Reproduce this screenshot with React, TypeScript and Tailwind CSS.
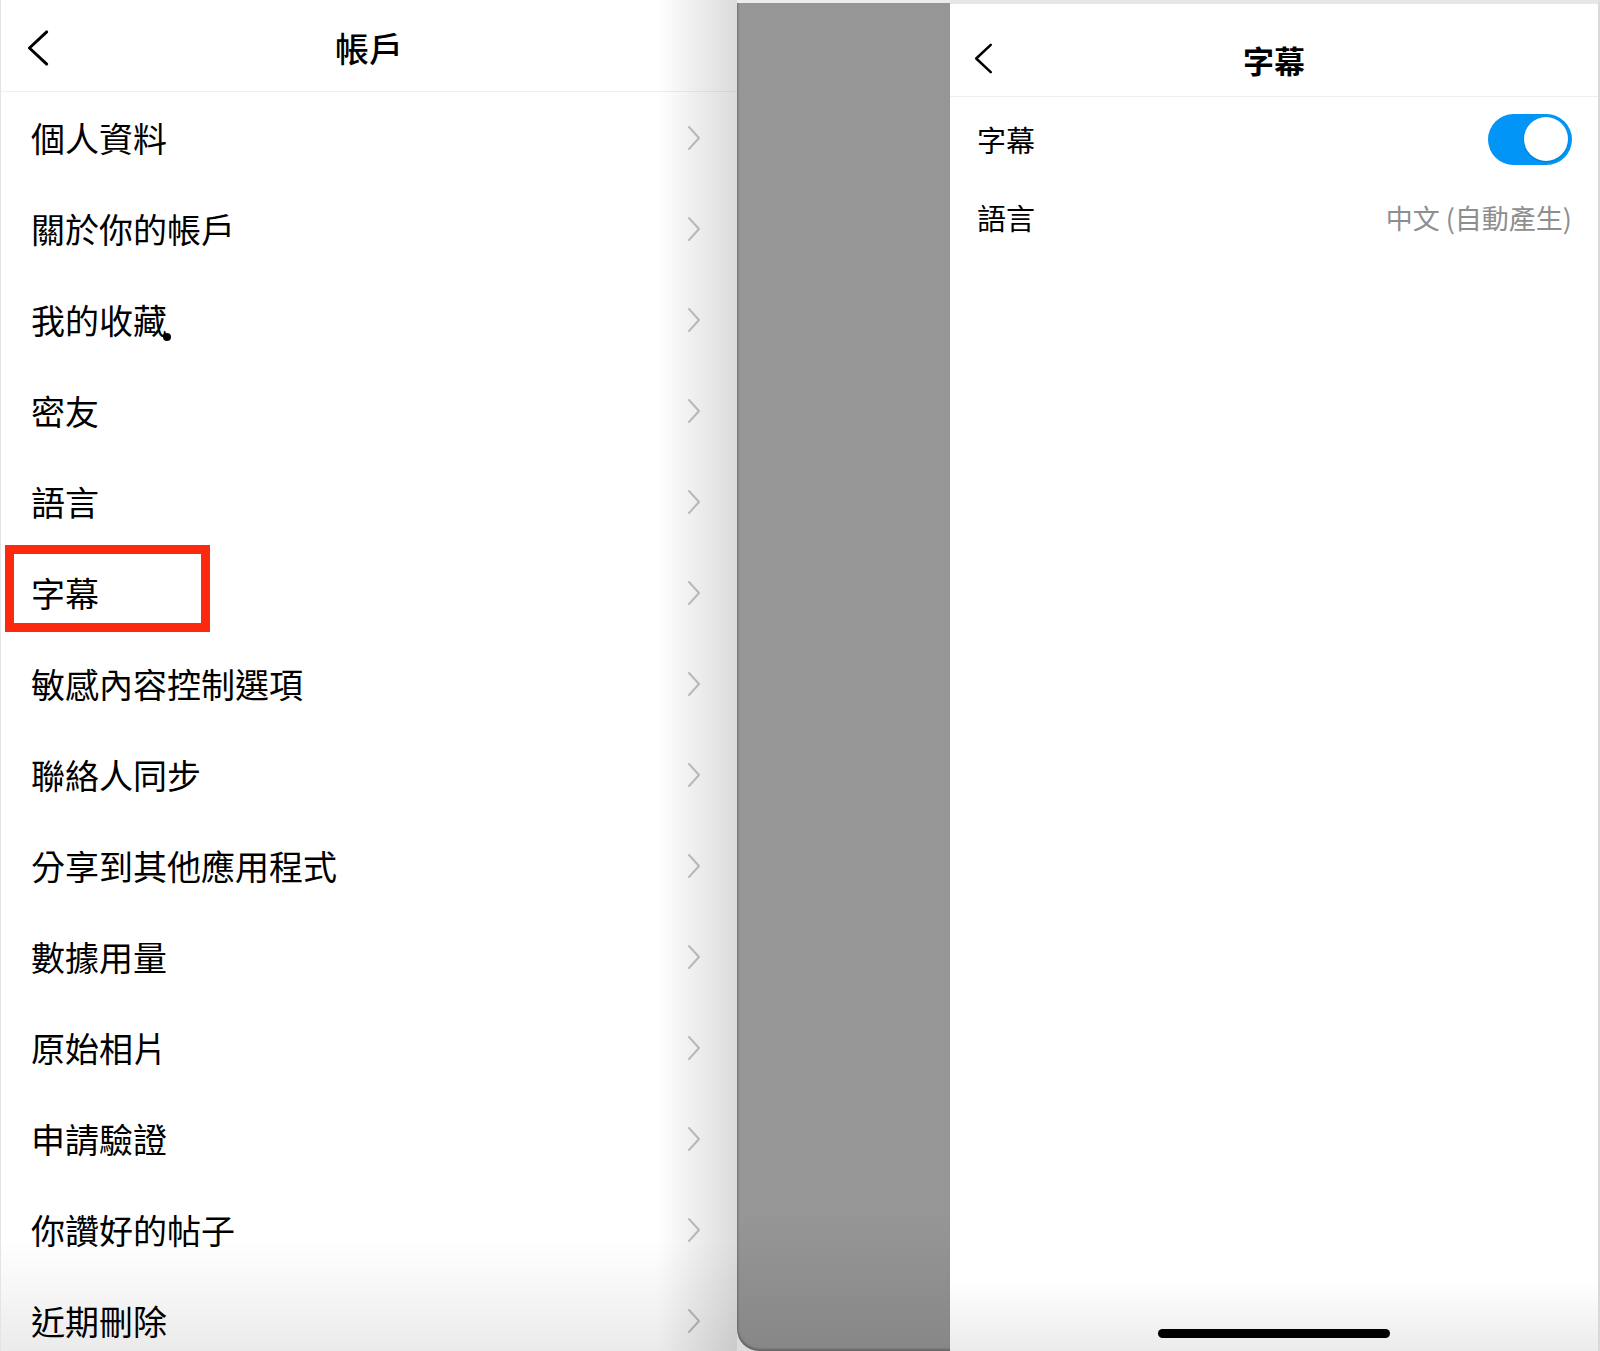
import React from "react";

const menuItems = [
  "個人資料",
  "關於你的帳戶",
  "我的收藏",
  "密友",
  "語言",
  "字幕",
  "敏感內容控制選項",
  "聯絡人同步",
  "分享到其他應用程式",
  "數據用量",
  "原始相片",
  "申請驗證",
  "你讚好的帖子",
  "近期刪除",
];

const cjk = { fontFamily: '"Noto Sans CJK TC", "Noto Sans CJK SC", sans-serif' };

const BackIcon = ({ w, h }: { w: number; h: number }) => (
  <svg width={w} height={h} viewBox="0 0 20 32" fill="none">
    <path
      d="M18 2 L3 16 L18 30"
      stroke="#000"
      strokeWidth="2.6"
      strokeLinecap="round"
      strokeLinejoin="round"
    />
  </svg>
);

const Chevron = () => (
  <svg width="14" height="26" viewBox="0 0 14 26" fill="none">
    <path
      d="M2 2 L12 13 L2 24"
      stroke="#c4c4c4"
      strokeWidth="2"
      strokeLinecap="round"
      strokeLinejoin="round"
    />
  </svg>
);

const AccountPanel = () => {
  return (
    <div className="relative w-[737px] h-full bg-white overflow-hidden border-l border-[#e4e4e4]">
      <div className="relative h-[92px] pt-[4px] flex items-center justify-center border-b border-[#efefef]">
        <div className="absolute left-[25px] top-[29px]">
          <BackIcon w={23} h={38} />
        </div>
        <p className="text-[34px] font-medium text-black leading-none" style={cjk}>
          帳戶
        </p>
      </div>
      <div className="flex flex-col">
        {menuItems.map((item) => (
          <div
            key={item}
            className="h-[91px] flex items-center justify-between pl-[30px] pr-[36px]"
          >
            <span className="text-[34px] text-black leading-none" style={cjk}>
              {item}
            </span>
            <Chevron />
          </div>
        ))}
      </div>
      {/* cursor dot */}
      <div className="absolute left-[162px] top-[333px] w-[8px] h-[8px] rounded-full bg-black" />
      {/* highlight box */}
      <div className="absolute left-[4px] top-[545px] w-[205px] h-[87px] border-[9px] border-[#fb2a0e]" />
      {/* shading */}
      <div className="pointer-events-none absolute top-0 right-0 h-full w-[80px] bg-linear-to-r from-transparent to-black/[0.14]" />
      <div className="pointer-events-none absolute bottom-0 left-0 w-full h-[110px] bg-linear-to-b from-transparent to-black/[0.08]" />
    </div>
  );
};

const CaptionPanel = () => {
  return (
    <div className="relative flex-1 h-full bg-white border-t-4 border-t-[#e6e6e6] border-r-2 border-r-[#d9d9d9] overflow-hidden">
      <div className="relative h-[93px] pt-[18px] flex items-center justify-center border-b border-[#efefef]">
        <div className="absolute left-[23px] top-[39px]">
          <BackIcon w={20} h={31} />
        </div>
        <p className="text-[31px] font-semibold text-black leading-none" style={cjk}>
          字幕
        </p>
      </div>
      <div className="h-[84px] flex items-center justify-between pl-[27px] pr-[26px]">
        <span className="text-[29px] text-black leading-none" style={cjk}>
          字幕
        </span>
        <div className="w-[84px] h-[51px] rounded-full bg-[#0095f6] flex items-center justify-end pr-[4px]">
          <div className="w-[44px] h-[44px] rounded-full bg-white shadow-[0_1px_2px_rgba(0,0,0,0.2)]" />
        </div>
      </div>
      <div className="h-[72px] flex items-center justify-between pl-[27px] pr-[26px]">
        <span className="text-[29px] text-black leading-none" style={cjk}>
          語言
        </span>
        <span className="text-[27px] text-[#8e8e8e] leading-none" style={cjk}>
          中文 (自動產生)
        </span>
      </div>
      <div className="pointer-events-none absolute bottom-0 left-0 w-full h-[70px] bg-linear-to-b from-transparent to-black/[0.08]" />
      <div className="absolute bottom-[13px] left-1/2 -translate-x-1/2 w-[232px] h-[9px] rounded-full bg-black" />
    </div>
  );
};

export default function App() {
  return (
    <div className="w-[1600px] h-[1351px] flex bg-[#dcdcdc] overflow-hidden">
      <AccountPanel />
      <div className="w-[213px] h-full border-t-[3px] border-t-[#ececec] rounded-bl-[22px] bg-linear-to-b from-[#969696] from-90% to-[#878787] shadow-[inset_1px_-2px_2px_rgba(0,0,0,0.25)]" />
      <CaptionPanel />
    </div>
  );
}
